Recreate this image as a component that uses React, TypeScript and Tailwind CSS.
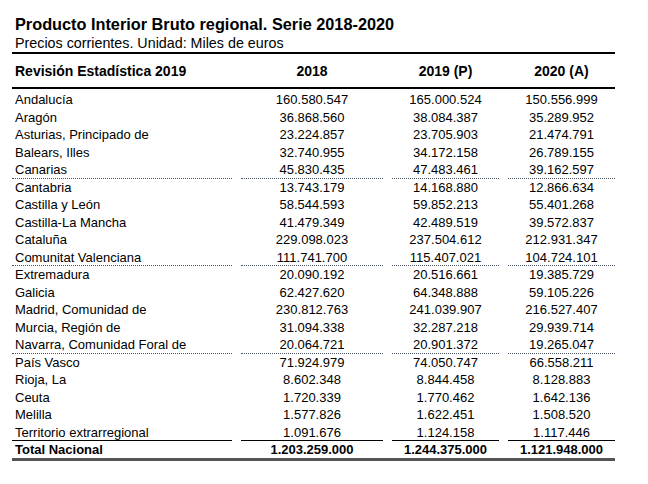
const GROUPS: [string, string, string, string][][] = [
  [
    ['Andalucía', '160.580.547', '165.000.524', '150.556.999'],
    ['Aragón', '36.868.560', '38.084.387', '35.289.952'],
    ['Asturias, Principado de', '23.224.857', '23.705.903', '21.474.791'],
    ['Balears, Illes', '32.740.955', '34.172.158', '26.789.155'],
    ['Canarias', '45.830.435', '47.483.461', '39.162.597'],
  ],
  [
    ['Cantabria', '13.743.179', '14.168.880', '12.866.634'],
    ['Castilla y León', '58.544.593', '59.852.213', '55.401.268'],
    ['Castilla-La Mancha', '41.479.349', '42.489.519', '39.572.837'],
    ['Cataluña', '229.098.023', '237.504.612', '212.931.347'],
    ['Comunitat Valenciana', '111.741.700', '115.407.021', '104.724.101'],
  ],
  [
    ['Extremadura', '20.090.192', '20.516.661', '19.385.729'],
    ['Galicia', '62.427.620', '64.348.888', '59.105.226'],
    ['Madrid, Comunidad de', '230.812.763', '241.039.907', '216.527.407'],
    ['Murcia, Región de', '31.094.338', '32.287.218', '29.939.714'],
    ['Navarra, Comunidad Foral de', '20.064.721', '20.901.372', '19.265.047'],
  ],
  [
    ['País Vasco', '71.924.979', '74.050.747', '66.558.211'],
    ['Rioja, La', '8.602.348', '8.844.458', '8.128.883'],
    ['Ceuta', '1.720.339', '1.770.462', '1.642.136'],
    ['Melilla', '1.577.826', '1.622.451', '1.508.520'],
    ['Territorio extrarregional', '1.091.676', '1.124.158', '1.117.446'],
  ],
];

const COLS = 'grid grid-cols-[220px_142px_107px_107px] gap-x-[9px]';

function Row({ row, last, groupEnd }: { row: string[]; last: boolean; groupEnd: boolean }) {
  // separator under each group: dotted between groups, solid before the total
  const border = !groupEnd
    ? ''
    : last
      ? 'border-b border-black'
      : 'border-b border-dotted border-gray-600';
  return (
    <div className={COLS}>
      {row.map((cell, i) => (
        <div
          key={i}
          className={`h-[17.5px] leading-[17px] ${border} ${i === 0 ? 'pl-[3px] text-left' : 'text-center'}`}
        >
          {cell}
        </div>
      ))}
    </div>
  );
}

export default function App() {
  return (
    <div
      className="w-[648px] h-[484px] bg-white text-black pt-[14px] pl-[12px]"
      style={{ fontFamily: '"Liberation Sans", Arial, sans-serif' }}
    >
      <div className="w-[603px]">
        <h1 className="pl-[3px] text-[16.3px] font-bold leading-[20px]">
          Producto Interior Bruto regional. Serie 2018-2020
        </h1>
        <p className="pl-[3px] text-[14.3px] leading-[18px]">
          Precios corrientes. Unidad: Miles de euros
        </p>

        {/* Header */}
        <div className={`${COLS} h-[37px] border-y-2 border-black text-[14px] font-bold items-center pt-[1px]`}>
          <div className="pl-[3px]">Revisión Estadística 2019</div>
          <div className="text-center">2018</div>
          <div className="text-center">2019 (P)</div>
          <div className="text-center">2020 (A)</div>
        </div>

        {/* Body */}
        <div className="text-[13px] pt-[2px]">
          {GROUPS.map((group, g) =>
            group.map((row, r) => (
              <Row
                key={`${g}-${r}`}
                row={row}
                groupEnd={r === group.length - 1}
                last={g === GROUPS.length - 1}
              />
            )),
          )}
          <div className={`${COLS} h-[20px] border-b-[3px] border-[#555] font-bold leading-[18px]`}>
            <div className="pl-[3px]">Total Nacional</div>
            <div className="text-center">1.203.259.000</div>
            <div className="text-center">1.244.375.000</div>
            <div className="text-center">1.121.948.000</div>
          </div>
        </div>
      </div>
    </div>
  );
}
